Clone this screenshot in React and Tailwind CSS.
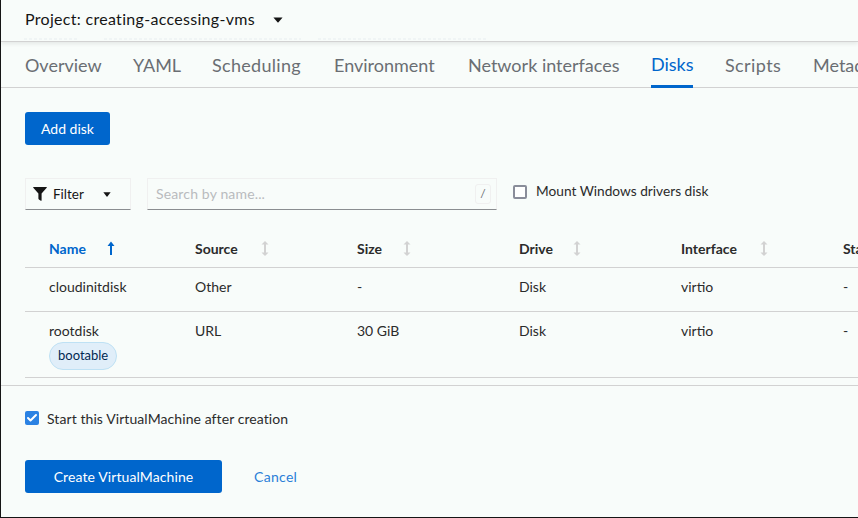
import React from 'react';
import { Check } from 'lucide-react';

const tabs = [
    { label: 'Overview', width: 'w-[76px]' },
    { label: 'YAML', width: 'w-[47px]' },
    { label: 'Scheduling', width: 'w-[90px] tracking-[0.3px]' },
    { label: 'Environment', width: 'w-[102px]' },
    { label: 'Network interfaces', width: 'w-[151px]' },
    { label: 'Disks', width: 'w-[42px]' },
    { label: 'Scripts', width: 'w-[56px] tracking-[0.4px]' },
    { label: 'Metadata', width: 'w-[80px]' },
];

// label widths keep the sort icons in their column spots
const columns = [
    { name: 'Name', width: 'w-[58px]', active: true },
    { name: 'Source', width: 'w-[66px]' },
    { name: 'Size', width: 'w-[46px]' },
    { name: 'Drive', width: 'w-[54px]' },
    { name: 'Interface', width: 'w-[79px]' },
    { name: 'Status', width: 'w-[60px]' },
];

const ghostStrips = ['left-[23px] w-[54px]', 'left-[103px] w-[197px]', 'left-[317px] w-[168px]'];

const SortIcon = ({ active }) => (
    <svg width="8" height="15" viewBox="0 0 8 15" className={active ? 'text-[#06c]' : 'text-[#d2d2d2]'} fill="currentColor">
        {active ? (
            <path d="M4 0.5 7.5 5H5V14H3V5H0.5Z" />
        ) : (
            <path d="M4 0 7.5 3.5H5V11.5H7.5L4 15 0.5 11.5H3V3.5H0.5Z" />
        )}
    </svg>
);

const Caret = ({ size = 'w-[10px] h-[6px]' }) => (
    <svg viewBox="0 0 12 7" preserveAspectRatio="none" className={`${size} text-[#151515]`} fill="currentColor">
        <path d="M0.5 0.5H11.5L6.6 6.2Q6 6.8 5.4 6.2Z" />
    </svg>
);

const Funnel = () => (
    <svg width="14" height="14" viewBox="0 0 14 14" fill="#151515">
        <path d="M0.6 0H13.4Q14.2 0 13.7 0.8L8.6 6.6V13.2Q8.6 14 7.8 13.7L5.9 12.5Q5.4 12.2 5.4 11.6V6.6L0.3 0.8Q-0.2 0 0.6 0Z" />
    </svg>
);

const App = () => {
    return (
        <div className="w-[858px] h-[518px] overflow-hidden bg-[#f8fcfa] border-l border-b border-[#151515] text-[#151515] text-sm flex flex-col font-['Lato',sans-serif]">
            <div className="h-[42px] shrink-0 flex items-center pl-[24px] pb-[2px] border-b border-[#d2d2d2] shadow-[0_2px_4px_rgba(3,3,3,0.08)] relative">
                <span className="text-[16px] tracking-[0.3px]">Project: creating-accessing-vms</span>
                <span className="ml-[18px] flex"><Caret /></span>
                {ghostStrips.map(strip => (
                    <div key={strip} className={`absolute top-[38px] h-[2px] opacity-30 bg-[repeating-linear-gradient(90deg,#dde5ea_0_3px,transparent_3px_5px)] ${strip}`} />
                ))}
            </div>

            <div className="h-[46px] shrink-0 flex pl-[24px] gap-[32px] border-b border-[#d2d2d2] whitespace-nowrap">
                {tabs.map(tab => (
                    <div
                        key={tab.label}
                        className={`flex items-center pt-[2px] text-[18px] shrink-0 ${tab.width} ${tab.label === 'Disks' ? 'text-[#06c] border-b-[3px] border-[#06c] -mb-[1px]' : 'text-[#6a6e73]'}`}
                    >
                        {tab.label}
                    </div>
                ))}
            </div>

            <div className="pl-[24px] pt-[24px]">
                <button className="w-[85px] h-[33px] rounded-[3px] bg-[#06c] text-white text-[14px]">Add disk</button>

                <div className="mt-[33px] flex items-start h-[32px]">
                    <div className="w-[106px] h-[32px] flex items-center pl-[7px] border border-[#f0f0f0] border-b-[#8a8d90]">
                        <Funnel />
                        <span className="ml-[6px] mt-[2px] text-[13.5px]">Filter</span>
                        <span className="ml-[19px] flex"><Caret size="w-[8px] h-[5px]" /></span>
                    </div>
                    <div className="ml-[16px] w-[350px] h-[32px] flex items-center justify-between pl-[8px] pr-[5px] border border-[#f0f0f0] border-b-[#8a8d90]">
                        <span className="text-[14px] tracking-[0.15px] text-[#b8bbbe]">Search by name...</span>
                        <span className="w-[16px] h-[20px] mb-[1px] rounded-[3px] border border-[#f0f0f0] flex items-center justify-center text-[12px] text-[#6a6e73]">/</span>
                    </div>
                    <div className="ml-[16px] h-[28px] flex items-center">
                        <span className="w-[14px] h-[14px] rounded-[2px] border-2 border-[#8a8d9a] bg-white" />
                        <span className="ml-[9px] -mt-[2px] text-[13.7px] text-[#2b2b2b]">Mount Windows drivers disk</span>
                    </div>
                </div>

                <table className="mt-[17px] w-[980px] table-fixed border-collapse text-[14px]">
                    <colgroup>
                        <col className="w-[146px]" />
                        <col className="w-[162px]" />
                        <col className="w-[162px]" />
                        <col className="w-[162px]" />
                        <col className="w-[162px]" />
                        <col />
                    </colgroup>
                    <thead>
                        <tr className="h-[40px] border-b border-[#d2d2d2]">
                            {columns.map(col => (
                                <th key={col.name} className={`text-left font-bold p-0 pl-[24px] pt-[3px] ${col.active ? 'text-[#06c]' : 'text-[#2b2b2b]'}`}>
                                    <span className="inline-flex items-center">
                                        <span className={`${col.width} pt-[2px] shrink-0`}>{col.name}</span>
                                        <SortIcon active={col.active} />
                                    </span>
                                </th>
                            ))}
                        </tr>
                    </thead>
                    <tbody className="text-[#2b2b2b]">
                        <tr className="h-[44px] border-b border-[#d2d2d2]">
                            <td className="pl-[24px] pb-[4px]">cloudinitdisk</td>
                            <td className="pl-[24px] pb-[4px]">Other</td>
                            <td className="pl-[24px] pb-[4px]">-</td>
                            <td className="pl-[24px] pb-[4px]">Disk</td>
                            <td className="pl-[24px] pb-[4px]">virtio</td>
                            <td className="pl-[24px] pb-[4px]">-</td>
                        </tr>
                        <tr className="h-[66px] border-b border-[#d2d2d2] align-top">
                            <td className="pl-[24px] pt-[9px]">
                                <div className="leading-[19px]">rootdisk</div>
                                <span className="mt-[2px] inline-flex items-center h-[28px] px-[8px] rounded-full bg-[#e0eef9] border border-[#bee1f4] text-[#002952] text-[13px]">bootable</span>
                            </td>
                            <td className="pl-[24px] pt-[9px] leading-[19px]">URL</td>
                            <td className="pl-[24px] pt-[9px] leading-[19px]">30 GiB</td>
                            <td className="pl-[24px] pt-[9px] leading-[19px]">Disk</td>
                            <td className="pl-[24px] pt-[9px] leading-[19px]">virtio</td>
                            <td className="pl-[24px] pt-[9px] leading-[19px]">-</td>
                        </tr>
                    </tbody>
                </table>
            </div>

            <div className="mt-[7px] border-t border-[#d2d2d2] pl-[24px] pt-[23px]">
                <div className="flex items-center h-[18px]">
                    <span className="w-[14px] h-[14px] rounded-[2px] bg-[#2b82e3] flex items-center justify-center">
                        <Check size={12} color="white" strokeWidth={4} />
                    </span>
                    <span className="ml-[8px] mt-[3px] text-[14px] tracking-[0.08px] text-[#2b2b2b]">Start this VirtualMachine after creation</span>
                </div>
                <div className="mt-[33px] flex items-center">
                    <button className="w-[197px] h-[33px] pt-[2px] rounded-[3px] bg-[#06c] text-white text-[14px] tracking-[0.1px]">Create VirtualMachine</button>
                    <span className="ml-[32px] mt-[2px] text-[#2b7fd8] text-[14px] tracking-[0.3px]">Cancel</span>
                </div>
            </div>
        </div>
    );
};

export default App;
